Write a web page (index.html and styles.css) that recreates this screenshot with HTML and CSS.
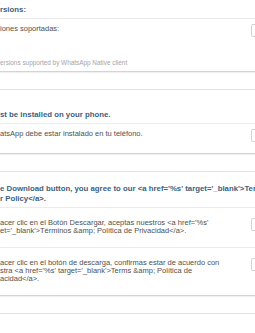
FILE: index.html
```html
<!DOCTYPE html>
<html lang="es">
  <head>
    <meta charset="UTF-8" />
    <title>Traducciones - Cadenas</title>
    <meta name="viewport" content="width=device-width, initial-scale=1.0" />
    <link rel="stylesheet" href="styles.css">
  </head>
  <body>
    <div class="strings">
      <!-- STRING: supported versions -->
      <section class="string">
        <h4 class="source">rsions:</h4>
        <div class="card">
          <div class="entry">
            <p class="text">iones soportadas:</p>
            <span class="field"></span>
          </div>
          <p class="hint">ersions supported by WhatsApp Native client</p>
        </div>
      </section>

      <!-- STRING: install notice -->
      <section class="string">
        <h4 class="source">st be installed on your phone.</h4>
        <div class="card">
          <div class="entry">
            <p class="text">atsApp debe estar instalado en tu teléfono.</p>
            <span class="field"></span>
          </div>
        </div>
      </section>

      <!-- STRING: download terms (two translations) -->
      <section class="string string--long">
        <h4 class="source">e Download button, you agree to our &lt;a href='%s' target='_blank'&gt;Terms &amp;amp; Privacy<br>r Policy&lt;/a&gt;.</h4>
        <div class="card card--tall">
          <div class="entry">
            <p class="text">acer clic en el Botón Descargar, aceptas nuestros &lt;a href='%s'<br>et='_blank'&gt;Términos &amp;amp; Política de Privacidad&lt;/a&gt;.</p>
            <span class="field"></span>
          </div>
          <div class="entry">
            <p class="text">acer clic en el botón de descarga, confirmas estar de acuerdo con<br>stra &lt;a href='%s' target='_blank'&gt;Terms &amp;amp; Política de<br>acidad&lt;/a&gt;.</p>
            <span class="field"></span>
          </div>
        </div>
      </section>
    </div>
  </body>
</html>
```

FILE: styles.css
```css
/* RESET */
* {
  margin: 0;
  padding: 0;
  box-sizing: border-box;
}

body {
  font-family: "Liberation Sans", Arial, sans-serif;
  background: #fff;
  width: 255px;
  height: 333px;
  overflow: hidden;
}

/* LIST OF STRINGS (wider than the window, cut on both sides) */
.strings {
  margin-top: -15px;
  margin-left: -4px;
  width: 290px;
}

.string {
  padding: 20px 0 17px;
  border-bottom: 1px solid #e3e3e3;
}
.string--long {
  padding-top: 12px;
}

.source {
  padding-left: 4px;
  font-size: 7.8px;
  line-height: 10px;
  font-weight: 700;
  color: #3b5f80;
  white-space: nowrap;
}

/* TRANSLATION CARD */
.card {
  margin-top: 3px;
  background: #fff;
  border-top: 1px solid #ececec;
  border-bottom: 1px solid #d4d4d4;
  box-shadow: 0 1px 1px rgba(0, 0, 0, 0.06);
}

.entry {
  display: flex;
  align-items: flex-start;
  padding: 6px 15px 11px 4px;
}
.card--tall .entry {
  padding: 11px 15px 12px 4px;
}
.card--tall .entry + .entry {
  border-top: 1px solid #ececec;
}

.text {
  flex: 1;
  font-size: 7.5px;
  line-height: 8px;
  color: #505050;
  white-space: nowrap;
}

.field {
  flex-shrink: 0;
  width: 20px;
  height: 13px;
  margin-top: -1px;
  border: 1px solid #d2d2d2;
  border-radius: 2px;
  background: #fff;
}

.hint {
  padding: 10px 4px 4px;
  font-size: 6.4px;
  line-height: 9px;
  color: #a5a5a5;
  white-space: nowrap;
}
```
